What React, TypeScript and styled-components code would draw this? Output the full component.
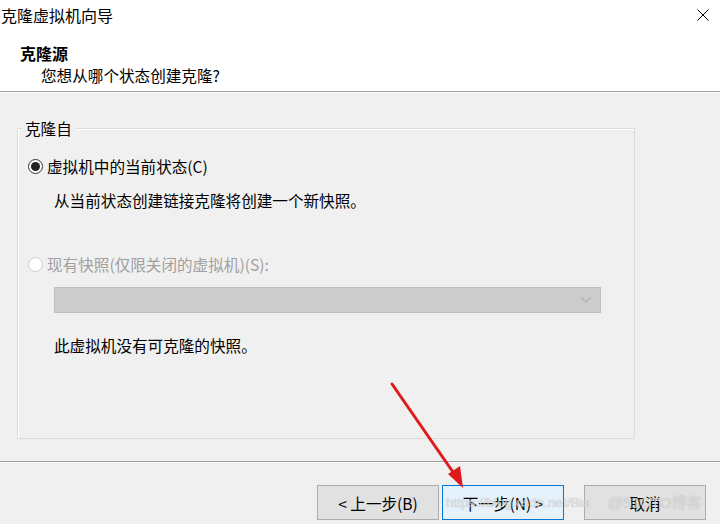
import React from "react";
import styled, { createGlobalStyle } from "styled-components";

const Global = createGlobalStyle`
  html, body { margin: 0; padding: 0; background: #f0f0f0; }
  body { font-family: "Noto Sans CJK SC", "Noto Sans", sans-serif; color: #000; }
  * { box-sizing: border-box; }
`;

const Window = styled.div`
  position: relative;
  width: 720px;
  height: 524px;
  display: flex;
  flex-direction: column;
  background: #f0f0f0;
  overflow: hidden;
  font-size: 15.6px;
`;

const Header = styled.div`
  height: 92px;
  background: #fff;
  border-bottom: 1px solid #a0a0a0;
  display: flex;
  flex-direction: column;
`;

const TitleBar = styled.div`
  height: 30px;
  display: flex;
  align-items: center;
  justify-content: space-between;
  padding: 0 11px 0 1px;
`;

const Title = styled.span`
  font-size: 16px;
  line-height: 20px;
`;

const HeadTitle = styled.div`
  margin: 13px 0 0 20px;
  font-weight: bold;
  font-size: 16px;
  line-height: 20px;
`;

const HeadSub = styled.div`
  margin: 2px 0 0 41px;
  line-height: 20px;
`;

const Body = styled.div`
  flex: 1;
  border-top: 1px solid #fff;
  padding: 35px 0 0 17px;
`;

const GroupBox = styled.div`
  position: relative;
  width: 618px;
  height: 311px;
  border: 1px solid #dcdcdc;
  box-shadow: inset 1px 1px 0 #fff;
  padding: 27px 0 0 10px;
  display: flex;
  flex-direction: column;
`;

const Legend = styled.span`
  position: absolute;
  top: -11px;
  left: 4px;
  padding: 0 3px;
  background: #f0f0f0;
  line-height: 20px;
`;

const RadioRow = styled.div<{ $disabled?: boolean; $mt?: number }>`
  display: flex;
  align-items: center;
  gap: 4px;
  height: 20px;
  margin-top: ${(p) => p.$mt ?? 0}px;
  color: ${(p) => (p.$disabled ? "#a0a0a0" : "#000")};
`;

const RadioDot = styled.span<{ $checked?: boolean; $disabled?: boolean }>`
  width: 15px;
  height: 15px;
  border-radius: 50%;
  border: 1px solid ${(p) => (p.$disabled ? "#cccccc" : "#333")};
  background: #fff;
  display: flex;
  align-items: center;
  justify-content: center;
  &::after {
    content: "";
    display: ${(p) => (p.$checked ? "block" : "none")};
    width: 9px;
    height: 9px;
    border-radius: 50%;
    background: #222;
  }
`;

const Text = styled.div<{ $mt: number }>`
  margin: ${(p) => p.$mt}px 0 0 26px;
  height: 20px;
  line-height: 20px;
`;

const Combo = styled.div`
  margin: 13px 0 0 26px;
  width: 547px;
  height: 26px;
  background: #cccccc;
  border: 1px solid #bfbfbf;
  display: flex;
  align-items: center;
  justify-content: flex-end;
  padding-right: 8px;
`;

const Footer = styled.div`
  height: 63px;
  border-top: 1px solid #a0a0a0;
  box-shadow: inset 0 1px 0 #fff;
  display: flex;
  justify-content: flex-end;
  align-items: flex-start;
  padding: 23px 14px 0 0;
`;

const Button = styled.div<{ $primary?: boolean; $gap?: number }>`
  width: 122px;
  height: 35px;
  margin-left: ${(p) => p.$gap ?? 0}px;
  display: flex;
  align-items: center;
  justify-content: center;
  white-space: pre;
  background: ${(p) => (p.$primary ? "#e5f1fb" : "#e1e1e1")};
  border: 1px solid ${(p) => (p.$primary ? "#0078d7" : "#adadad")};
`;

const Overlay = styled.svg`
  position: absolute;
  left: 0;
  top: 0;
  pointer-events: none;
`;

const Watermark = styled.div`
  position: absolute;
  left: 446px;
  top: 493px;
  display: flex;
  align-items: center;
  gap: 18px;
  height: 20px;
  color: rgba(255, 255, 255, 0.6);
  text-shadow: 0 0 1px rgba(110, 110, 110, 0.6);
  white-space: nowrap;
  pointer-events: none;
`;

const MarkPart = styled.span<{ $size: number }>`
  font-family: "Liberation Sans", "Noto Sans CJK SC", sans-serif;
  font-size: ${(p) => p.$size}px;
  line-height: 20px;
`;

export default function App() {
  return (
    <>
      <Global />
      <Window>
        <Header>
          <TitleBar>
            <Title>克隆虚拟机向导</Title>
            <svg width="12" height="12" viewBox="0 0 12 12">
              <path d="M0.5 0.5 L11.5 11.5 M11.5 0.5 L0.5 11.5" stroke="#000" strokeWidth="1" />
            </svg>
          </TitleBar>
          <HeadTitle>克隆源</HeadTitle>
          <HeadSub>您想从哪个状态创建克隆?</HeadSub>
        </Header>
        <Body>
          <GroupBox>
            <Legend>克隆自</Legend>
            <RadioRow>
              <RadioDot $checked />
              <span>虚拟机中的当前状态(C)</span>
            </RadioRow>
            <Text $mt={14}>从当前状态创建链接克隆将创建一个新快照。</Text>
            <RadioRow $disabled $mt={44}>
              <RadioDot $disabled />
              <span>现有快照(仅限关闭的虚拟机)(S):</span>
            </RadioRow>
            <Combo>
              <svg width="12" height="8" viewBox="0 0 12 8">
                <path d="M1 1.5 L6 6 L11 1.5" stroke="#b0b0b0" strokeWidth="1.2" fill="none" />
              </svg>
            </Combo>
            <Text $mt={22}>此虚拟机没有可克隆的快照。</Text>
          </GroupBox>
        </Body>
        <Footer>
          <Button>{"< 上一步(B)"}</Button>
          <Button $primary $gap={3}>{"下一步(N) >"}</Button>
          <Button $gap={20}>取消</Button>
        </Footer>
        <Watermark>
          <MarkPart $size={13.5}>https://blog.csdn.net/Bia</MarkPart>
          <MarkPart $size={15}>@51CTO博客</MarkPart>
        </Watermark>
        <Overlay width="720" height="524" viewBox="0 0 720 524">
          <line x1="392" y1="384" x2="455" y2="475" stroke="#e0191b" strokeWidth="3" strokeLinecap="round" />
          <polygon points="463,488 448,474 460,466" fill="#e0191b" />
        </Overlay>
      </Window>
    </>
  );
}
